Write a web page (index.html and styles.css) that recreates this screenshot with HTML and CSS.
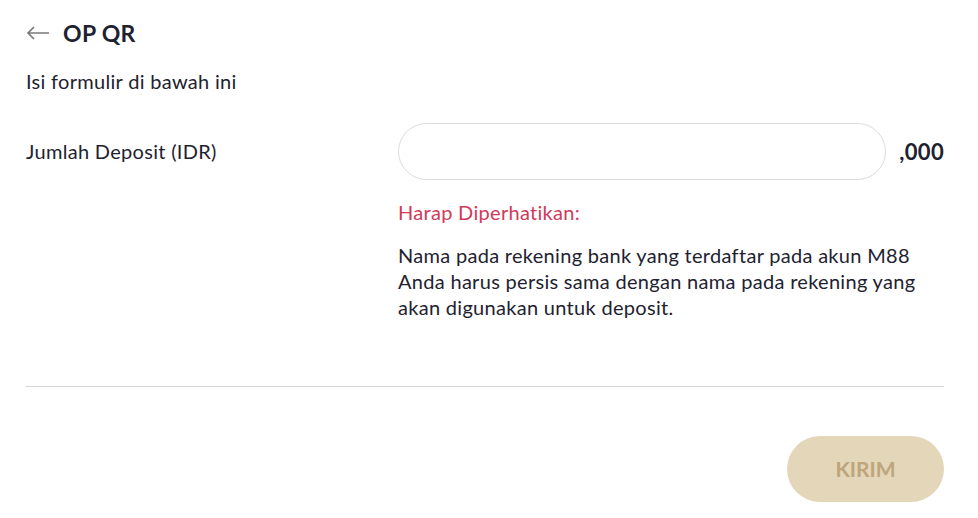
FILE: index.html
```html
<!DOCTYPE html>
<html lang="id">
<head>
    <meta charset="UTF-8">
    <meta name="viewport" content="width=device-width, initial-scale=1.0">
    <title>OP QR</title>
    <link rel="stylesheet" href="styles.css">
</head>
<body>
    <div class="page">
        <div class="header">
            <svg class="back" width="24" height="14" viewBox="0 0 24 14">
                <path d="M23 7H2M8 1L2 7l6 6" fill="none" stroke="#7a7a7a" stroke-width="1.7"/>
            </svg>
            <h1>OP QR</h1>
        </div>
        <p class="intro">Isi formulir di bawah ini</p>

        <div class="form-row">
            <label for="amount">Jumlah Deposit (IDR)</label>
            <div class="field">
                <div class="amount">
                    <input type="text" id="amount">
                    <span class="suffix">,000</span>
                </div>
                <div class="note-title">Harap Diperhatikan:</div>
                <p class="note">Nama pada rekening bank yang terdaftar pada akun M88 Anda harus persis sama dengan nama pada rekening yang akan digunakan untuk deposit.</p>
            </div>
        </div>

        <hr class="divider">

        <div class="actions">
            <button class="submit" disabled>KIRIM</button>
        </div>
    </div>
</body>
</html>
```

FILE: styles.css
```css
body {
    margin: 0;
    font-family: Lato, "Liberation Sans", sans-serif;
    font-size: 20px;
    letter-spacing: 0.3px;
    color: #1e2230;
    background: white;
}
.page {
    padding: 2px 34px 0 26px;
}
.header {
    display: flex;
    align-items: center;
    height: 62px;
}
.back {
    margin-right: 13px;
}
.header h1 {
    margin: 0;
    font-size: 23px;
    font-weight: bold;
}
.intro {
    margin: 6px 0 0;
    line-height: 22px;
}
.form-row {
    display: flex;
    margin-top: 31px;
}
label {
    width: 372px;
    padding-top: 16px;
}
.field {
    flex: 1;
}
.amount {
    display: flex;
    align-items: center;
}
.amount input {
    flex: 1;
    height: 57px;
    border: 1px solid #dcdcdc;
    border-radius: 29px;
    box-sizing: border-box;
    padding: 0 20px;
    font-size: 20px;
    font-family: inherit;
    outline: none;
}
.suffix {
    margin-left: 13px;
    font-size: 22px;
    font-weight: bold;
}
.note-title {
    margin-top: 21px;
    color: #d1395a;
    line-height: 22px;
}
.note {
    margin: 19px 0 0;
    line-height: 26px;
}
.divider {
    margin: 66px 0 0;
    border: none;
    border-top: 1px solid #d6d6d6;
}
.actions {
    display: flex;
    justify-content: flex-end;
    margin-top: 49px;
}
.submit {
    width: 157px;
    height: 66px;
    border: none;
    border-radius: 33px;
    background: #e3d6b9;
    color: #bea57c;
    font-family: inherit;
    font-size: 21px;
    font-weight: bold;
    padding-bottom: 3px;
}
```
